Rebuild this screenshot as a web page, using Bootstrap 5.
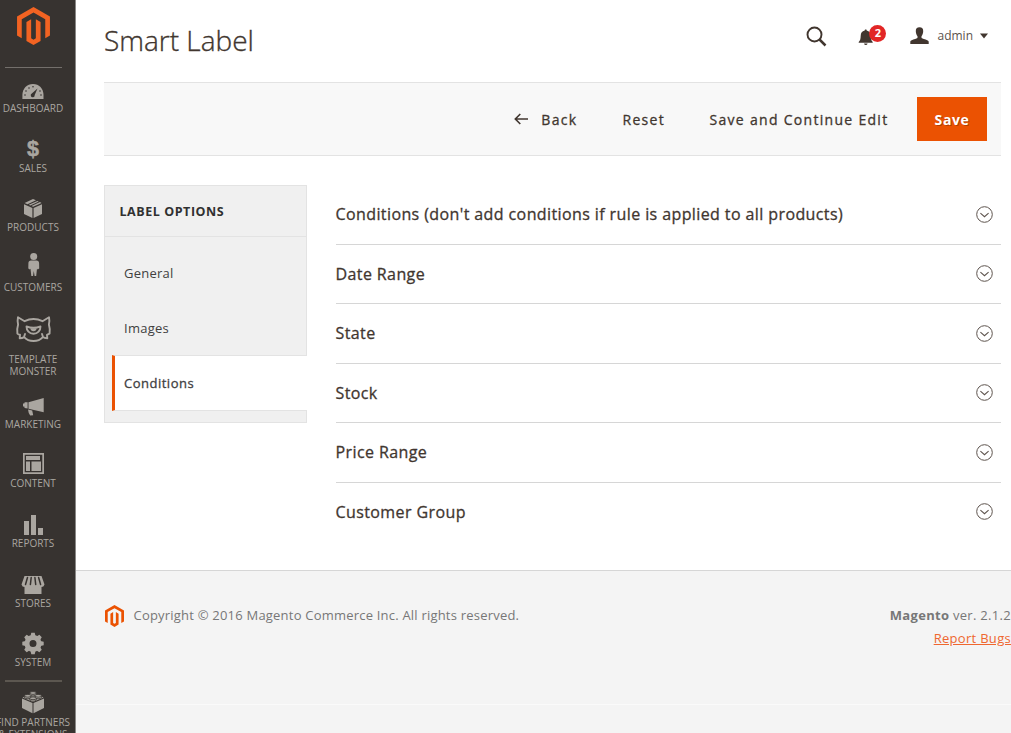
<!DOCTYPE html>
<html lang="en">
<head>
<meta charset="utf-8">
<meta name="viewport" content="width=device-width, initial-scale=1">
<title>Smart Label / Magento Admin</title>
<link href="https://cdn.jsdelivr.net/npm/bootstrap@5.3.0/dist/css/bootstrap.min.css" rel="stylesheet">
<style>
body{font-family:"Open Sans","Noto Sans",sans-serif;color:#41362f;height:733px;overflow:hidden;background:#fff;font-size:13px}
.side-menu{width:76px;height:733px;background:#373330;border-right:1px solid #8a8886;overflow:hidden;color:#aaa6a0}
.side-logo{height:67px;padding:7px 0 0 17px}
.side-rule{width:57px;height:1px;margin-left:5px;background:#736f6b}
.menu-entry{width:66px;margin-top:11.5px;font-size:10px;line-height:12px;color:inherit;text-decoration:none;white-space:nowrap}
.menu-entry svg{overflow:visible;fill:#aaa6a0}
.menu-entry span{display:block;height:12px}
.page-head{height:82px;padding:20px 23px 0 28px}
.page-title{font-size:28px;font-weight:300;line-height:40px;margin:0;-webkit-text-stroke:.35px #41362f}
.head-tools{height:31px}
.alert-count{left:11px;top:-3px;width:17px;height:17px;background:#e22626;color:#fff;font-size:11px;font-weight:700;line-height:16px}
.action-bar{height:74px;margin:0 10px 0 28px;background:#f8f8f8;border-top:1px solid #e3e3e3;border-bottom:1px solid #e3e3e3;font-size:14px;padding-right:14px}
.action-bar a{color:#41362f;text-decoration:none;letter-spacing:1.3px}
.action-bar a:not(.btn-save),.fold-row span,.tab-panel a.current{-webkit-text-stroke:.3px currentColor}
.btn-save{width:70px;height:44px;background:#eb5202;border-radius:0;color:#fff!important;font-size:14px;font-weight:700;text-shadow:1px 1px 0 rgba(0,0,0,.25)}
.work-area{height:414px;padding:29px 10px 0 28px}
.tab-panel{width:203px;height:238px;background:#f0f0f0;border:1px solid #e3e3e3}
.tab-heading{height:51px;line-height:51px;border-bottom:1px solid #e3e3e3;padding-left:14.5px;font-size:12.5px;font-weight:700;letter-spacing:.55px;color:#303030;margin:0 0 8px}
.tab-panel a{display:block;height:55px;line-height:57px;padding-left:19px;text-decoration:none;color:#41403f;letter-spacing:.25px}
.tab-panel a.current{background:#fff;border-top:1px solid #e3e3e3;border-bottom:1px solid #e3e3e3;border-left:3px solid #eb5202;margin:0 -1px 0 7px;padding-left:9px;line-height:54px;height:56px;letter-spacing:.5px}
.fold-row{height:59.55px;border-bottom:1px solid #d6d6d6;font-size:16px;letter-spacing:.4px;color:#41362f;padding-right:8px}
.fold-row:last-child{border-bottom:0;height:58px}
.page-foot{height:163px;background:#f4f4f4;border-top:1px solid #d6d6d6;color:#777;letter-spacing:.21px}
.foot-main{height:134px;border-bottom:1px solid #fafafa;padding:33px 0 0 29px}
.foot-main a{color:#ef672f}
.foot-right{line-height:23px;letter-spacing:.3px}
</style>
</head>
<body>
<svg width="0" height="0" class="position-absolute">
<symbol id="mage" viewBox="1.6 0 20.8 24"><path d="M12 24l-4.455-2.572v-12l2.970-1.715v12.001l1.485.902 1.485-.902V7.713l2.971 1.715v12L12 24zM22.391 6v12l-2.969 1.714V7.713L12 3.430 4.574 7.713v12.001L1.609 18V6L12 0l10.391 6z"/></symbol>
<symbol id="fold" viewBox="0 0 17 17"><g fill="none" stroke="#5d534d"><circle cx="8.5" cy="8.5" r="7.8"/><path d="M4.4 7.2 8.5 10.7 12.6 7.2" stroke-width="1.1"/></g></symbol>
</svg>
<div class="d-flex">
<nav class="side-menu flex-shrink-0">
  <div class="side-logo"><svg class="d-block" width="33" height="38" fill="#f26322"><use href="#mage"/></svg></div>
  <div class="side-rule"></div>
  <a href="#" class="menu-entry d-flex flex-column align-items-center" style="margin-top:-2px"><svg width="40" height="36"><path d="M9.400 33v-4C9.400 22.500 14 18 20 18s10.500 4.500 10.500 11v4z"/><g fill="#373330"><path d="M24.500 22.500 21.700 29a2 2 0 1 1-2.900-1.500z"/><circle cx="20" cy="20.800" r=".8"/><circle cx="16" cy="22" r=".8"/><circle cx="13" cy="25" r=".8"/><circle cx="12" cy="29" r=".8"/><circle cx="27" cy="25" r=".8"/><circle cx="28" cy="29" r=".8"/></g></svg><span>DASHBOARD</span></a>
  <a href="#" class="menu-entry d-flex flex-column align-items-center"><svg width="40" height="36"><text x="20" y="30" text-anchor="middle" font-family="Liberation Sans,sans-serif" font-size="21.500" font-weight="700" stroke="#aaa6a0" stroke-width=".5">$</text></svg><span>SALES</span></a>
  <a href="#" class="menu-entry d-flex flex-column align-items-center"><svg width="40" height="36"><path d="M11 19.200 19.400 22.900V33L11 29zM29 19.200 20.600 22.900V33L29 29zM20 14l3 1.300-8.500 3.900-2.900-1.300zM24.300 15.900l1.500.7-8.500 3.900-1.500-.7zM27 17.100l1.500.8-8.400 3.800-1.600-.7z"/></svg><span>PRODUCTS</span></a>
  <a href="#" class="menu-entry d-flex flex-column align-items-center"><svg width="40" height="36"><circle cx="20.700" cy="11.500" r="3.500"/><path d="M18 15.600h5.500c1.700 0 2.500 1 2.600 2.600l.1 5.200-1.500 1.200-.7-.9-.8 7.400h-1.600L20.800 26 20 31.100h-1.700l-.8-7.400-.7.900-1.500-1.200.1-5.200c.1-1.600.9-2.600 2.600-2.600z"/></svg><span>CUSTOMERS</span></a>
  <a href="#" class="menu-entry d-flex flex-column align-items-center" style="margin-top:24px"><svg width="40" height="36"><g fill="none" stroke="#aaa6a0" stroke-width="1.900" stroke-linejoin="round" stroke-linecap="round"><path d="M5 .2 11.600 4.200Q20.500-.1 29.500 4.200L36 .2q.8 3.600-.1 7.400c1 3.500 1.300 6.200.7 9-1 .8-1.900 1-2.600 1.200l.3 3.500q-3-.1-4.400-1.200c-4.700 5.200-14.200 5.200-18.800 0q-1.700 1.100-4.400 1.200l.3-3.500q-1.500-.2-2.600-1.200c-.6-2.800-.3-5.500.7-9Q4.200 3.800 5 .2zM30 20l-1-3M11 20l1-3"/><path d="M13.500 9.500q7 2.500 14 0c0 4-2.800 7.300-7 7.300s-7-3.300-7-7.300z"/></g><path d="M17.300 11.300h6.400q-.4 2.900-3.200 2.900t-3.200-2.900z"/></svg><span>TEMPLATE</span><span>MONSTER</span></a>
  <a href="#" class="menu-entry d-flex flex-column align-items-center" style="margin-top:5px"><svg width="40" height="36"><path d="M30.700 16v14.200L15.500 26.800v-6.500zM14.600 20.300v6.300l-3-.6-.3-1.400H10v-3.200h1.300l.4-1.100zM15 27.500l4.200 1 1 4.700-3 .2q-1.900-2.300-2.200-5.900z"/></svg><span>MARKETING</span></a>
  <a href="#" class="menu-entry d-flex flex-column align-items-center"><svg width="40" height="36"><path d="M10 12h21v21H10zm1.700 1.700v17.600h17.600V13.700zM13 15h14v4H13zM13 20.500h4V30h-4zM18.500 20.500H28V30h-9.500z" fill-rule="evenodd"/></svg><span>CONTENT</span></a>
  <a href="#" class="menu-entry d-flex flex-column align-items-center"><svg width="40" height="36"><path d="M11 20h5v14h-5zM18 14h5v20h-5zM25 27h5v7h-5z"/></svg><span>REPORTS</span></a>
  <a href="#" class="menu-entry d-flex flex-column align-items-center" style="margin-top:12px"><svg width="40" height="36"><path d="M11.500 15h17l3 8.500q-.8 2.500-3 2.500V33h-17v-7q-2.300 0-3-2.500z"/><g stroke="#373330" stroke-width="1.500" stroke-linecap="round"><path d="M14.500 16.500l-2 7M18.200 16.500l-.8 7M21.900 16.500l.8 7M25.600 16.500l2 7"/></g></svg><span>STORES</span></a>
  <a href="#" class="menu-entry d-flex flex-column align-items-center" style="margin-top:11px"><svg width="40" height="36"><g transform="translate(20 23.500)"><circle r="6" fill="none" stroke="#aaa6a0" stroke-width="5"/><g id="teeth"><path id="tooth" d="M-2.500-7.500-1.700-10.700H1.700L2.500-7.500zM-2.500 7.500-1.700 10.700H1.700L2.500 7.500z"/><use href="#tooth" transform="rotate(90)"/></g><use href="#teeth" transform="rotate(45)"/></g></svg><span>SYSTEM</span></a>
  <div class="side-rule" style="margin-top:12.500px;height:2px;background:#5c5750"></div>
  <a href="#" class="menu-entry d-flex flex-column align-items-center" style="margin-top:-2px"><svg width="40" height="36"><path d="M9 18.400 19.500 23v10.200L9 27.900zM31 18.400 20.500 23v10.200L31 27.900zM20 12.500l10.500 5L20 22 9.500 17.500z"/><g stroke="#373330" stroke-width=".8"><path d="M16.800 13v2c1 1.300 5.400 1.300 6.400 0v-2M11.600 15.800v2c1 1.300 5.400 1.300 6.400 0v-2M22 15.800v2c1 1.300 5.400 1.300 6.400 0v-2M16.800 18.300v2c1 1.300 5.400 1.300 6.400 0v-2"/><ellipse cx="20" cy="13" rx="3.200" ry="1.400"/><ellipse cx="14.800" cy="15.800" rx="3.200" ry="1.400"/><ellipse cx="25.200" cy="15.800" rx="3.200" ry="1.400"/><ellipse cx="20" cy="18.300" rx="3.200" ry="1.400"/></g></svg><span>FIND PARTNERS</span><span>&amp; EXTENSIONS</span></a>
</nav>
<div class="flex-grow-1">
  <header class="page-head d-flex justify-content-between align-items-start">
    <h1 class="page-title">Smart Label</h1>
    <div class="head-tools d-flex align-items-center">
      <svg width="22" height="22" viewBox="0 0 22 22" fill="none" stroke="#41362f" stroke-width="1.900"><circle cx="9.500" cy="9.500" r="7"/><path d="M14.500 14.500 20.500 20.500" stroke-width="2.500"/></svg>
      <div class="position-relative" style="margin-left:31px;top:1px"><svg class="d-block" width="16" height="18" viewBox="0 0 16 18" fill="#41362f"><path d="M7 1.500h1.400l.3 1c2.700.5 3.900 2.500 4 5.200.1 3 .4 4.800 2 6.300v.8H.700V14c1.600-1.500 1.900-3.300 2-6.300.1-2.700 1.300-4.700 4-5.200zM6 15.500h3.600q-.3 1.500-1.800 1.500T6 15.500z"/></svg><span class="alert-count position-absolute rounded-circle text-center">2</span></div>
      <svg style="margin-left:36px" width="19" height="17" viewBox="0 0 19 17" fill="#41362f"><path d="M9.500.3c2.600 0 3.800 1.500 3.700 4-.1 2.300-.7 3.700-1.700 4.900v1.500c.5 1.400 6.300 1.600 7.200 3.800V17H.300v-2.500c.9-2.200 6.700-2.400 7.200-3.800V9.200C6.500 8 5.900 6.600 5.800 4.300c-.1-2.500 1.100-4 3.700-4z"/></svg>
      <span style="margin-left:8px;font-size:12px;color:#5c534d">admin</span>
      <svg style="margin-left:7px" width="8" height="6" viewBox="0 0 8 6"><path d="M0 .5h8L4 5.500z" fill="#41362f"/></svg>
    </div>
  </header>
  <div class="action-bar d-flex align-items-center justify-content-end">
    <a href="#" class="d-flex align-items-center"><svg width="14" height="12" viewBox="0 0 14 12" fill="none" stroke="#41362f" stroke-width="1.600" style="margin-right:13px"><path d="M14 6H1.500M6.300 1 1.300 6l5 5"/></svg><span>Back</span></a>
    <a href="#" style="margin-left:45px"><span>Reset</span></a>
    <a href="#" style="margin-left:44.500px"><span>Save and Continue Edit</span></a>
    <a href="#" class="btn btn-save d-flex align-items-center justify-content-center p-0" style="margin-left:28.500px;letter-spacing:.6px">Save</a>
  </div>
  <main class="work-area d-flex align-items-start">
    <aside class="tab-panel flex-shrink-0">
      <h2 class="tab-heading">LABEL OPTIONS</h2>
      <a href="#">General</a>
      <a href="#">Images</a>
      <a href="#" class="current">Conditions</a>
    </aside>
    <section class="flex-grow-1" style="margin-left:28.500px">
      <div class="fold-row d-flex align-items-center justify-content-between"><span>Conditions (don't add conditions if rule is applied to all products)</span><svg width="17" height="17"><use href="#fold"/></svg></div>
      <div class="fold-row d-flex align-items-center justify-content-between"><span>Date Range</span><svg width="17" height="17"><use href="#fold"/></svg></div>
      <div class="fold-row d-flex align-items-center justify-content-between"><span>State</span><svg width="17" height="17"><use href="#fold"/></svg></div>
      <div class="fold-row d-flex align-items-center justify-content-between"><span>Stock</span><svg width="17" height="17"><use href="#fold"/></svg></div>
      <div class="fold-row d-flex align-items-center justify-content-between"><span>Price Range</span><svg width="17" height="17"><use href="#fold"/></svg></div>
      <div class="fold-row d-flex align-items-center justify-content-between"><span>Customer Group</span><svg width="17" height="17"><use href="#fold"/></svg></div>
    </section>
  </main>
  <footer class="page-foot">
    <div class="foot-main d-flex justify-content-between align-items-start">
      <div class="d-flex align-items-center" style="height:24px"><svg width="19" height="22" fill="#eb5202"><use href="#mage"/></svg><span style="margin-left:9.500px">Copyright © 2016 Magento Commerce Inc. All rights reserved.</span></div>
      <div class="foot-right text-end"><div><b>Magento</b> ver. 2.1.2</div><a href="#">Report Bugs</a></div>
    </div>
  </footer>
</div>
</div>
<script src="https://cdn.jsdelivr.net/npm/bootstrap@5.3.0/dist/js/bootstrap.bundle.min.js"></script>
</body>
</html>
